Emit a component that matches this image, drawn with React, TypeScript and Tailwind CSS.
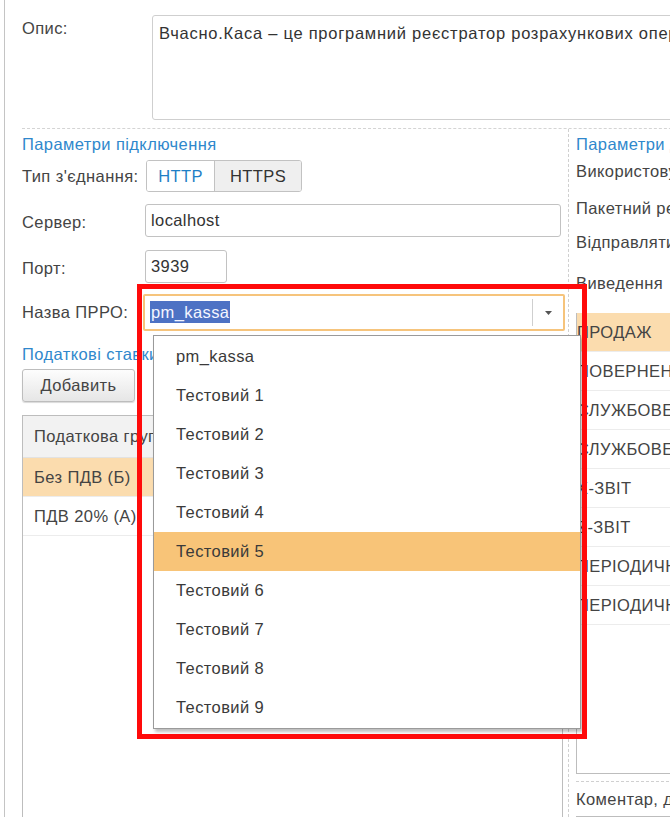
import React from 'react';

const font = { fontFamily: '"Liberation Sans", Arial, "Noto Sans", sans-serif' };

const rightRows = ['ПРОДАЖ', 'ПОВЕРНЕННЯ', 'СЛУЖБОВЕ', 'СЛУЖБОВЕ', 'Х-ЗВІТ', 'Z-ЗВІТ', 'ПЕРІОДИЧНИЙ', 'ПЕРІОДИЧНИЙ'];
const listItems = ['pm_kassa', 'Тестовий 1', 'Тестовий 2', 'Тестовий 3', 'Тестовий 4', 'Тестовий 5', 'Тестовий 6', 'Тестовий 7', 'Тестовий 8', 'Тестовий 9'];

/**
 * Форма налаштування ПРРО з відкритим списком "Назва ПРРО"
 */
export default function App() {
  return (
    <div className="relative w-[670px] h-[817px] overflow-hidden bg-white text-[16.5px] tracking-[0.4px] text-[#444]" style={font}>
      <div className="flex h-full">
        <div className="w-[4px] shrink-0" />
        <div className="flex-1 flex flex-col border-l border-[#c4c4c4] pl-[17px] min-w-0">
          {/* Опис */}
          <div className="flex pt-[15px]">
            <div className="w-[130px] shrink-0 pt-[1px]">Опис:</div>
            <div className="w-[540px] shrink-0 h-[105px] border border-[#cfcfcf] rounded-[3px] px-[6px] pt-[5px] whitespace-nowrap overflow-hidden text-[#333] tracking-[0.75px]">
              Вчасно.Каса – це програмний реєстратор розрахункових операцій
            </div>
          </div>
          <div className="mt-[8px] border-t border-dashed border-[#d4d4d4] w-[680px]" />

          <div className="flex flex-1 min-h-0">
            {/* Ліва колонка */}
            <div className="w-[546px] shrink-0 flex flex-col">
              <div className="mt-[6px] h-[18px] leading-[18px] text-[#2f88cc]">Параметри підключення</div>
              <div className="mt-[7px] flex items-center h-[32px]">
                <div className="w-[124px] shrink-0">Тип з'єднання:</div>
                <div className="flex h-[32px] border border-[#c2c2c2] rounded-[3px] overflow-hidden">
                  <div className="w-[68px] flex items-center justify-center bg-white text-[#1f7fc6] border-r border-[#c2c2c2]">HTTP</div>
                  <div className="w-[86px] flex items-center justify-center bg-[#efefef] text-[#333]">HTTPS</div>
                </div>
              </div>
              <div className="mt-[12px] flex items-center h-[33px]">
                <div className="w-[123px] shrink-0 pt-[3px]">Сервер:</div>
                <div className="w-[416px] h-[33px] border border-[#c2c2c2] rounded-[3px] px-[5px] flex items-center text-[#333]">localhost</div>
              </div>
              <div className="mt-[13px] flex items-center h-[33px]">
                <div className="w-[123px] shrink-0 pt-[3px]">Порт:</div>
                <div className="w-[82px] h-[33px] border border-[#c2c2c2] rounded-[3px] px-[5px] flex items-center text-[#333]">3939</div>
              </div>
              <div className="mt-[11px] flex items-center h-[37px]">
                <div className="w-[121px] shrink-0">Назва ПРРО:</div>
                <div className="w-[422px] h-[37px] border-2 border-[#f6c47c] rounded-[2px] flex items-center">
                  <div className="flex-1 pl-[5px]">
                    <span className="bg-[#4d72c4] text-[#f4f6ff] px-[1px] py-[2px]">pm_kassa</span>
                  </div>
                  <div className="w-[31px] h-[27px] border-l border-[#cfcfcf] flex items-center justify-center">
                    <svg width="7" height="4" viewBox="0 0 7 4"><path d="M0 0h7L3.5 4z" fill="#555" /></svg>
                  </div>
                </div>
              </div>
              <div className="mt-[14px] h-[18px] leading-[18px] text-[#2f88cc]">Податкові ставки</div>
              <div className="mt-[6px]">
                <button className="w-[113px] h-[33px] border border-[#bdbdbd] rounded-[3px] bg-gradient-to-b from-[#fdfdfd] to-[#e6e6e6] text-[#444] shadow-[0_1px_1px_rgba(0,0,0,0.15)]">
                  Добавить
                </button>
              </div>
              <div className="mt-[13px] flex-1 w-[541px] border-l border-r border-t border-[#bdbdbd] flex flex-col">
                <div className="h-[42px] bg-[#f2f2f2] border-b border-[#e2e2e2] flex items-center px-[11px]">Податкова група</div>
                <div className="h-[39px] bg-[#fbdcae] border-b border-[#ececec] flex items-center px-[11px]">Без ПДВ (Б)</div>
                <div className="h-[39px] border-b border-[#ececec] flex items-center px-[11px]">ПДВ 20% (А)</div>
              </div>
            </div>

            {/* Права колонка */}
            <div className="flex-1 flex flex-col border-l border-dashed border-[#d0d0d0] pl-[7px] whitespace-nowrap">
              <div className="mt-[6px] h-[18px] leading-[18px] text-[#2f88cc]">Параметри друку</div>
              <div className="mt-[9px] h-[18px] leading-[18px]">Використовувати</div>
              <div className="mt-[19px] h-[18px] leading-[18px]">Пакетний режим</div>
              <div className="mt-[16px] h-[18px] leading-[18px]">Відправляти</div>
              <div className="mt-[23px] h-[18px] leading-[18px]">Виведення</div>
              <div className="mt-[21px] h-[461px] border-l border-b border-[#bdbdbd] flex flex-col">
                {rightRows.map((row, i) => (
                  <div
                    key={i}
                    className={
                      i === 0
                        ? 'h-[39px] shrink-0 bg-[#fbdcae] border-b border-[#ececec] flex items-center'
                        : 'h-[39px] shrink-0 border-b border-[#ececec] flex items-center'
                    }
                  >
                    {row}
                  </div>
                ))}
              </div>
              <div className="mt-[7px] border-t border-dashed border-[#d0d0d0]" />
              <div className="mt-[8px] h-[18px] leading-[18px]">Коментар, друк</div>
              <div className="mt-[8px] border-t border-[#bdbdbd]" />
            </div>
          </div>
        </div>
      </div>

      {/* Відкритий список */}
      <div className="absolute left-[153px] top-[335px] w-[428px] h-[394px] bg-white border border-[#9a9a9a] shadow-[2px_3px_3px_rgba(0,0,0,0.25)] pt-[1px]">
        {listItems.map((item, i) => (
          <div
            key={item}
            className={
              i === 5
                ? 'h-[39px] flex items-center pl-[22px] bg-[#f8c478] text-[#3a3a3a]'
                : 'h-[39px] flex items-center pl-[22px] text-[#3a3a3a]'
            }
          >
            {item}
          </div>
        ))}
      </div>

      {/* Червона рамка */}
      <div className="absolute left-[137px] top-[284px] w-[450px] h-[455px] border-[5px] border-[#ff0a0a] pointer-events-none" />
    </div>
  );
}
